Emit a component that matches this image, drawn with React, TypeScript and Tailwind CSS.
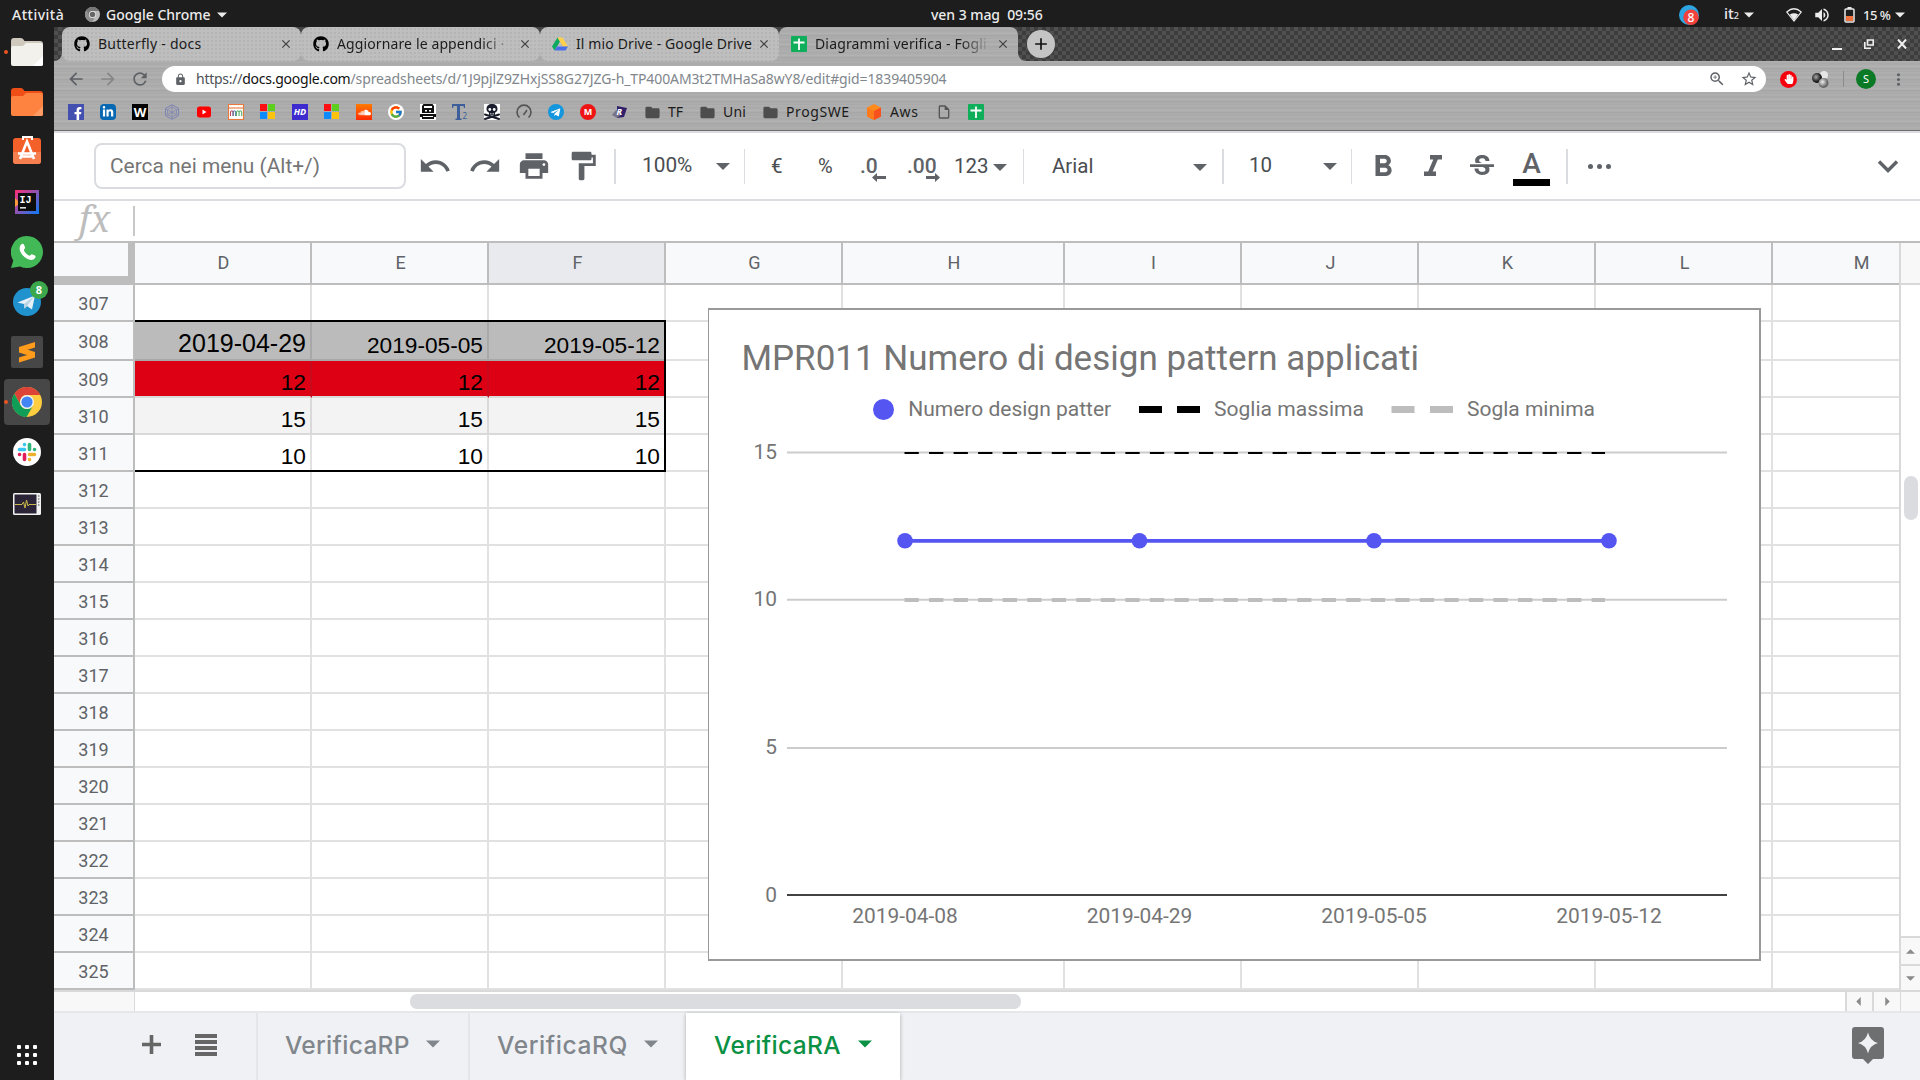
import React from "react";
import {
  MdUndo, MdRedo, MdPrint, MdFormatPaint, MdFormatBold, MdFormatItalic, MdStrikethroughS,
  MdArrowBack, MdArrowForward, MdRefresh, MdLock, MdStarBorder, MdZoomIn, MdMoreVert, MdAdd,
  MdClose, MdFolder, MdVolumeUp, MdOutlineInsertDriveFile,
} from "react-icons/md";
import { FaGithub, FaFacebookF, FaLinkedinIn, FaSoundcloud, FaTelegramPlane, FaHandPaper } from "react-icons/fa";
import { FcGoogle } from "react-icons/fc";

const METAL =
  "bg-[#ababab] bg-[repeating-linear-gradient(180deg,#a6a6a6_0px,#b2b2b2_2px,#a9a9a9_3px,#acacac_5px,#b4b4b4_7px,#a5a5a5_8px,#aeaeae_11px)]";
const CARBON = "bg-[repeating-conic-gradient(#505050_0_25%,#3d3d3d_0_50%)] bg-[length:8px_8px]";

function Caret({ className = "" }: { className?: string }) {
  return (
    <svg viewBox="0 0 14 7" className={"block shrink-0 " + className} fill="currentColor">
      <path d="M0 0h14L7 7z" />
    </svg>
  );
}

function ChromeLogo({ size, gray }: { size: number; gray?: boolean }) {
  const c = gray ? ["#777", "#bbb", "#8e8e8e", "#666"] : ["#db4437", "#ffcd40", "#0f9d58", "#4285f4"];
  return (
    <svg width={size} height={size} viewBox="-15 -15 30 30" className="block shrink-0">
      <circle r="15" fill={c[1]} />
      <path d="M0-7H13.3A15 15 0 0 0-12.6-8.2L-6.1 3.5A7 7 0 0 1 0-7z" fill={c[0]} />
      <path d="M-12.6-8.2A15 15 0 0 0-.4 15L6.1 3.5A7 7 0 0 1-6.1 3.5z" fill={c[2]} />
      <circle r="7" fill="#f1f1f1" />
      <circle r="5.6" fill={c[3]} />
    </svg>
  );
}

function TopBar() {
  return (
    <div className="h-[27px] shrink-0 bg-[#1d1d1d] text-[#ececec] font-['Noto_Sans',sans-serif] text-[14px] leading-[26px] font-medium grid grid-cols-[931px_1fr] whitespace-pre">
      <div className="flex items-center">
        <span className="ml-3 w-[73px] tracking-[0.5px]">Attività</span>
        <ChromeLogo size={15} gray />
        <span className="ml-[6px] w-[111px]">Google Chrome</span>
        <Caret className="w-[10px] h-[6px]" />
      </div>
      <div className="flex items-center">
        <span className="w-[748px] tracking-[-0.05px]">ven 3 mag  09:56</span>
        <svg width="20" height="20" viewBox="0 0 20 20" className="block">
          <circle cx="10" cy="10" r="10" fill="#2ca5e0" />
          <circle cx="12" cy="12.3" r="7.7" fill="#f0413c" />
          <text x="12" y="16.5" textAnchor="middle" fontSize="12" fill="#fff" fontFamily="Noto Sans">8</text>
        </svg>
        <span className="ml-[25px] w-[20px] text-[15px]">it<span className="text-[9px]">2</span></span>
        <Caret className="w-[10px] h-[6px]" />
        <svg width="16" height="14" viewBox="0 0 16 14" className="ml-[32px] block">
          <path d="M.8 4Q8-2.5 15.2 4L8 13z" fill="none" stroke="#ececec" strokeWidth="1.2" />
          <path d="M3.8 6.6Q8 4 12.2 6.6L8 12.5z" fill="#ececec" />
        </svg>
        <MdVolumeUp size={18} className="ml-[11px]" />
        <svg width="11" height="16" viewBox="0 0 11 16" className="ml-[13px] block">
          <path d="M3.5 0h4v2h-4z" fill="#ececec" />
          <rect x="1" y="2" width="9" height="13" rx="1" fill="none" stroke="#ececec" strokeWidth="1.5" />
          <rect x="2" y="9" width="7" height="5" fill="#f0713c" />
        </svg>
        <span className="ml-[8px] w-[32px] text-[13px] tracking-[-0.5px]">15 %</span>
        <Caret className="w-[10px] h-[6px]" />
      </div>
    </div>
  );
}

function DockItem({ h, children, active, dot }: { h: string; children: React.ReactNode; active?: boolean; dot?: boolean }) {
  return (
    <div className={"relative flex items-center justify-center shrink-0 w-[54px] " + h}>
      {dot && <span className="absolute left-1 top-1/2 -mt-0.5 z-10 size-1 rounded-full bg-[#e95420]" />}
      <div className={"size-[46px] rounded flex items-center justify-center " + (active ? "bg-[#474747]" : "")}>{children}</div>
    </div>
  );
}

function DockFolder({ body, tab, hi }: { body: string; tab: string; hi: string }) {
  return (
    <svg width="32" height="29" viewBox="0 0 32 29">
      <path d="M0 3Q0 0 3 0H10Q12 0 13.5 3H29Q32 3 32 6V14H0z" fill={tab} />
      <path d="M0 10Q0 8 2 8H12L15 5H30Q32 5 32 8V26Q32 28 30 28H2Q0 28 0 26z" fill={body} />
      <path d="M32 18V26Q32 28 30 28H22z" fill={hi} />
    </svg>
  );
}

function Dock() {
  return (
    <div className="w-[54px] shrink-0 bg-[#1d1d1d] flex flex-col">
      <DockItem h="h-[50px]" dot><DockFolder body="#f2f1ec" tab="#cfc9bd" hi="#fff" /></DockItem>
      <DockItem h="h-[50px]"><DockFolder body="#ff8340" tab="#f04e17" hi="#ff9c64" /></DockItem>
      <DockItem h="h-[50px]">
        <svg width="30" height="28" viewBox="0 0 30 28" className="mb-[5px]">
          <rect x="1" y="2" width="28" height="26" rx="3" fill="#f4602a" />
          <path d="M1 16h28v9q0 3-3 3H4q-3 0-3-3z" fill="#f67f50" />
          <path d="M11 4V1h9v3" fill="none" stroke="#fff" strokeWidth="2" />
          <path d="M8 23L15 5.500L22 23M6 17.500H24M10 20.500h10" fill="none" stroke="#fff" strokeWidth="2.600" />
        </svg>
      </DockItem>
      <DockItem h="h-[50px]">
        <svg width="24" height="24" viewBox="0 0 24 24">
          <defs>
            <linearGradient id="ij" x1="0" y1="0" x2="1" y2="1">
              <stop offset="0" stopColor="#fe2d75" /><stop offset=".5" stopColor="#8a54b4" /><stop offset="1" stopColor="#087cfa" />
            </linearGradient>
          </defs>
          <rect width="24" height="24" fill="url(#ij)" />
          <path d="M0 8l5 5-5 4z" fill="#fc9a3c" />
          <rect x="3" y="3" width="18" height="18" fill="#0d0d0d" />
          <text x="4.500" y="13" fontSize="10" fontWeight="700" fill="#fff" fontFamily="Liberation Mono">IJ</text>
          <rect x="5" y="17" width="6" height="1.600" fill="#ddd" />
        </svg>
      </DockItem>
      <DockItem h="h-[50px]">
        <svg width="32" height="32" viewBox="0 0 32 32">
          <path d="M16 0a16 16 0 1 1-7 30.400L0 32l2.300-7.600A16 16 0 0 1 16 0z" fill="#42b857" />
          <path d="M10.500 8.200c1-.8 2-.6 2.500.6l1.100 2.800c.2.700-1.400 2-1.200 2.600 1 2.400 3.200 4.500 5.500 5.500.7.200 1.800-1.700 2.500-1.500l3 1.400c.9.500.8 1.500.2 2.500-1.300 2-3.800 2.500-6.300 1.500-4.200-1.700-7.500-5-8.900-9.200-.6-2.400-.2-4.900 1.600-6.200z" fill="#fff" />
        </svg>
      </DockItem>
      <DockItem h="h-[50px]">
        <div className="relative">
          <svg width="28" height="28" viewBox="0 0 28 28">
            <circle cx="14" cy="14" r="14" fill="#2093cf" />
            <path d="M4.500 14.500L22 7.500 19 21.500l-5-3.500-2.500 2.500-.5-4.500z" fill="#e8f1f7" />
            <path d="M11 16L22 7.500 14 18l-2.500 2.500z" fill="#b9d3e4" />
          </svg>
          <span className="absolute -top-[7px] left-[17px] size-[18px] rounded-full bg-[#3aa84b] text-white text-[11px] leading-[18px] text-center font-bold font-['Noto_Sans',sans-serif]">8</span>
        </div>
      </DockItem>
      <DockItem h="h-[50px]">
        <svg width="32" height="32" viewBox="0 0 32 32">
          <rect width="32" height="32" rx="2" fill="#474747" />
          <path d="M8 11L24 6v5.500L8 16.500zM8 11l16 5v5.500L8 16.500zM8 21.500l16-5v5L8 26.500z" fill="#ff9c1c" />
        </svg>
      </DockItem>
      <DockItem h="h-[50px]" dot active><ChromeLogo size={30} /></DockItem>
      <DockItem h="h-[50px]">
        <svg width="28" height="28" viewBox="0 0 28 28" strokeWidth="3.600" strokeLinecap="round">
          <circle cx="14" cy="14" r="14" fill="#fff" />
          <path d="M6.500 11.500H11.500M11.500 6.500v.1" stroke="#36c5f0" />
          <path d="M16.500 6.500V11.500M21.500 11.500h.1" stroke="#2eb67d" />
          <path d="M16.500 16.500H21.500M16.500 21.500v.1" stroke="#ecb22e" />
          <path d="M11.500 16.500V21.500M6.500 16.500h.1" stroke="#e01e5a" />
        </svg>
      </DockItem>
      <DockItem h="h-[54px]">
        <svg width="28" height="22" viewBox="0 0 28 22">
          <rect width="28" height="22" rx="1.500" fill="#f2f2f2" />
          <rect x="1.500" y="1.500" width="22" height="19" fill="#2b2336" />
          <path d="M2 11.500h7l1.500-2.500 1.500 6L13.500 7l1.500 6 1-1.500H23" fill="none" stroke="#c9b94a" strokeWidth="1" />
          <path d="M25.700 2v12" stroke="#999" strokeWidth="1.500" strokeDasharray="2 1" />
        </svg>
      </DockItem>
      <div className="mt-auto mb-[15px] ml-[17px] grid grid-cols-3 gap-1 w-5">
        {Array.from({ length: 9 }, (_, i) => <span key={i} className="size-1 rounded-[1px] bg-white" />)}
      </div>
    </div>
  );
}

function DriveIcon() {
  return (
    <svg width="16" height="16" viewBox="0 0 16 16" className="block shrink-0">
      <path d="M5.500 1.500L0 10.500l2.500 4L8 5.500z" fill="#0da960" />
      <path d="M5.500 1.500h5l5.500 9h-5z" fill="#ffd04b" />
      <path d="M5 10.500h11l-2.500 4h-11z" fill="#4b6ee8" />
    </svg>
  );
}

function SheetsIcon() {
  return (
    <svg width="16" height="16" viewBox="0 0 16 16" className="block shrink-0">
      <rect width="16" height="16" rx="1" fill="#0fae5b" />
      <path d="M8 2.500V14M2.500 6.500h11" stroke="#fff" strokeWidth="1.800" />
    </svg>
  );
}

function Tab({ icon, title, active, fade, sep, tw }: { icon: React.ReactNode; title: string; active?: boolean; fade?: boolean; sep?: boolean; tw?: string }) {
  return (
    <div className="w-[239px] shrink-0 bg-[linear-gradient(#444_8px,transparent_8px)]">
      <div
        className={
          "relative h-[34px] flex items-center pl-3 pr-[11px] rounded-t-lg " +
          (active ? METAL : "bg-[#bebebe] bg-[radial-gradient(#b4b4b4_0.8px,transparent_1px)] bg-[length:4px_4px] rounded-b-lg")
        }
      >
        {icon}
        <span
          className={
            "ml-2 w-[178px] whitespace-nowrap text-[14px] leading-5 text-[#1b1b1b] " + (tw ?? "") +
            (fade ? " [mask-image:linear-gradient(90deg,#000_145px,transparent_176px)]" : "")
          }
        >
          {title}
        </span>
        <MdClose size={14} className="ml-auto -mr-[3px] shrink-0 text-[#3f3f3f]" />
        {sep && <span className="absolute -right-px top-2 h-[19px] w-px bg-[#7b7b7b]" />}
      </div>
    </div>
  );
}

function Sq({ bg, children, round }: { bg: string; children?: React.ReactNode; round?: boolean }) {
  return (
    <span className={"size-4 shrink-0 flex items-center justify-center text-white font-bold leading-4 font-['Noto_Sans',sans-serif] " + bg + (round ? " rounded-full" : "")}>
      {children}
    </span>
  );
}

function MsIcon() {
  return (
    <span className="size-4 shrink-0 grid grid-cols-[7px_7px] grid-rows-[7px_7px] gap-px">
      <i className="bg-[#ff0f12]" /><i className="bg-[#5cd01c]" /><i className="bg-[#0f8bfb]" /><i className="bg-[#ffc20e]" />
    </span>
  );
}

function Bookmarks() {
  return (
    <div className="h-[30px] flex items-center pl-[14px] text-[14px] leading-5 text-[#1b1b1b] whitespace-nowrap">
      <div className="flex gap-4 w-[577px]">
        <Sq bg="bg-[#4350af]"><FaFacebookF size={13} className="mt-[3px] ml-1" /></Sq>
        <Sq bg="bg-[#0667b2] rounded-sm"><FaLinkedinIn size={12} /></Sq>
        <Sq bg="bg-black text-[13px]">W</Sq>
        <svg width="16" height="16" viewBox="0 0 16 16" fill="none" stroke="#7d83b3" className="shrink-0">
          <path d="M8 .7l6.500 3.700v7.200L8 15.300 1.500 11.600V4.400z" /><path d="M8 3l4.500 2.500v5L8 13l-4.500-2.500v-5zM8 1v14M2 5l12 6.500M14 5L2 11.500" strokeWidth=".7" />
        </svg>
        <svg width="16" height="16" viewBox="0 0 16 16" className="shrink-0">
          <rect x="1" y="2.500" width="14" height="11" rx="2.500" fill="#f00" /><path d="M6.500 5.500v5l4-2.500z" fill="#fff" />
        </svg>
        <svg width="16" height="16" viewBox="0 0 16 16" fill="none" strokeWidth="1.100" className="shrink-0">
          <rect x=".5" y=".5" width="15" height="15" fill="#fff" stroke="#e8793a" />
          <path d="M1 4h14" stroke="#e8793a" /><path d="M2.500 12V8q1.300-2.500 2.600 0v4" stroke="#b45" /><path d="M5.100 12V8q1.300-2.500 2.600 0v4" stroke="#57a" /><path d="M8.500 12V8q1.300-2.500 2.600 0v4M11.100 8q1.300-2.500 2.600 0v4" stroke="#5a6" />
        </svg>
        <MsIcon />
        <Sq bg="bg-[#3d2bd0] text-[9px] italic">HD</Sq>
        <MsIcon />
        <Sq bg="bg-[linear-gradient(#ff7a00,#ff2a00)]"><FaSoundcloud size={13} /></Sq>
        <Sq bg="bg-white" round><FcGoogle size={14} /></Sq>
        <svg width="16" height="16" viewBox="0 0 16 16" className="shrink-0">
          <rect width="16" height="16" fill="#fff" />
          <path d="M3.500 0h9l1.500 2v7H2V2z" fill="#111" /><path d="M4 2h8v2H4zM5 6h2v1.500H5zM9 6h2v1.500H9z" fill="#fff" />
          <path d="M0 10h16v3h-2v2H2v-2H0z" fill="#111" /><path d="M3 12h10v1H3z" fill="#fff" />
        </svg>
        <svg width="16" height="16" viewBox="0 0 16 16" className="shrink-0" fill="#3c5f9c">
          <path d="M0 0h13v4h-1L11.500 2H8v12.500h1.500V16h-6v-1.500H5V2H1.500L1 4H0z" /><text x="10.500" y="15" fontSize="8" fontFamily="Noto Sans">2</text>
        </svg>
        <svg width="16" height="16" viewBox="0 0 16 16" className="shrink-0">
          <rect width="16" height="16" fill="#fff" />
          <path d="M1 10.500l14 4.500M15 10.500L1 15" stroke="#1a1d2b" strokeWidth="2" strokeLinecap="round" />
          <path d="M8 0C4.500 0 2.500 2 2.500 5c0 2 1 3 2.500 3.700V11h6V8.700C12.500 8 13.500 7 13.500 5c0-3-2-5-5.500-5z" fill="#1a1d2b" />
          <circle cx="5.800" cy="5.500" r="1.400" fill="#fff" /><circle cx="10.200" cy="5.500" r="1.400" fill="#fff" /><path d="M6.500 9v1.500M8 9v1.500M9.500 9v1.500" stroke="#fff" strokeWidth=".6" />
        </svg>
        <svg width="16" height="16" viewBox="0 0 16 16" fill="none" stroke="#555" strokeWidth="1.600" className="shrink-0">
          <path d="M3.500 13.500A7 7 0 1 1 12.500 13.500M7.500 11L11 6" />
        </svg>
        <Sq bg="bg-[#1296dd]" round><FaTelegramPlane size={11} className="-ml-0.5" /></Sq>
        <Sq bg="bg-[#ee1414] text-[9px]" round>M</Sq>
        <svg width="16" height="16" viewBox="0 0 16 16" className="shrink-0">
          <path d="M5 2l10 2-3 9-7 1z" fill="#33206b" /><path d="M0 11l4-5 6 4-5 4z" fill="#77738a" /><text x="4.500" y="11" fontSize="9" fontWeight="700" fontStyle="italic" fill="#fff" fontFamily="Noto Sans">R</text>
        </svg>
      </div>
      <MdFolder size={17} className="text-[#4d4d4d] mr-[7px] -ml-px" /><span className="w-[32px]">TF</span>
      <MdFolder size={17} className="text-[#4d4d4d] mr-[7px] -ml-px" /><span className="w-[40px] tracking-[0.2px]">Uni</span>
      <MdFolder size={17} className="text-[#4d4d4d] mr-[7px] -ml-px" /><span className="w-[80px] tracking-[0.6px]">ProgSWE</span>
      <svg width="16" height="16" viewBox="0 0 16 16" className="mr-2 shrink-0">
        <path d="M8 0l7 3.500v9L8 16 1 12.500v-9z" fill="#ff8a1e" /><path d="M8 7l7-3.500v9L8 16z" fill="#f9511d" /><path d="M1 3.500L8 7v9l-7-3.500z" fill="#ff7a1a" />
      </svg>
      <span className="w-[46px] tracking-[0.6px]">Aws</span>
      <MdOutlineInsertDriveFile size={16} className="text-[#555] mr-4" />
      <SheetsIcon />
    </div>
  );
}

function ChromeFrame() {
  return (
    <div className={"h-[104px] shrink-0 font-['Noto_Sans',sans-serif] border-b border-[#6f6f6f] " + METAL}>
      <div className="flex h-[34px]">
        <div className={"w-2 rounded-br-lg " + CARBON} />
        <Tab icon={<FaGithub size={16} className="shrink-0" />} title="Butterfly - docs" sep tw="tracking-[0.25px]" />
        <Tab icon={<FaGithub size={16} className="shrink-0" />} title="Aggiornare le appendici ·" tw="tracking-[0.12px]" fade sep />
        <Tab icon={<DriveIcon />} title="Il mio Drive - Google Drive" tw="tracking-[0.12px]" />
        <Tab icon={<SheetsIcon />} title="Diagrammi verifica - Fogli" active fade tw="tracking-[0.15px]" />
        <div className={"flex-1 rounded-bl-lg flex items-center text-[#f0f0f0] " + CARBON}>
          <span className="ml-[9px] size-7 rounded-full bg-[#c4c4c4] text-[#111] flex items-center justify-center"><MdAdd size={20} /></span>
          <span className="ml-auto mt-[9px] h-0.5 w-[10px] bg-current" />
          <svg width="10" height="10" viewBox="0 0 10 10" className="ml-[22px]" fill="none" stroke="currentColor" strokeWidth="1.600">
            <path d="M3.500 1h5.700v5H3.500zM.8 3v6.200H7" />
          </svg>
          <svg width="10" height="10" viewBox="0 0 10 10" className="ml-[23px] mr-[13px]" stroke="currentColor" strokeWidth="2"><path d="M1 .5l8 9M9 .5l-8 9" /></svg>
        </div>
      </div>
      <div className="h-9 flex items-center">
        <MdArrowBack size={20} className="ml-3 text-[#5d6065]" />
        <MdArrowForward size={20} className="ml-3 text-[#868686]" />
        <MdRefresh size={20} className="ml-3 text-[#5d6065]" />
        <div className="ml-[12px] w-[1604px] h-[26px] rounded-full bg-white flex items-center pl-[12px] text-[#5f6368]">
          <MdLock size={13} />
          <span className="ml-[9px] flex-1 text-[14px] leading-5 text-[#80868b] tracking-[-0.11px]">
            <span className="text-[#4d5156] tracking-[-0.25px]">https://</span><span className="text-[#111] tracking-[-0.25px]">docs.google.com</span>/spreadsheets/d/1J9pjlZ9ZHxjSS8G27JZG-h_TP400AM3t2TMHaSa8wY8/edit#gid=1839405904
          </span>
          <MdZoomIn size={18} />
          <MdStarBorder size={18} className="ml-[14px] mr-2" />
        </div>
        <span className="ml-[14px] size-[17px] rounded-full bg-[#f5000c] text-white flex items-center justify-center"><FaHandPaper size={10} /></span>
        <svg width="17" height="17" viewBox="0 0 17 17" className="ml-[15px]">
          <defs>
            <radialGradient id="ba" cx=".4" cy=".4"><stop offset="0" stopColor="#aaa" /><stop offset="1" stopColor="#111" /></radialGradient>
            <radialGradient id="bb" cx=".4" cy=".4"><stop offset="0" stopColor="#eee" /><stop offset="1" stopColor="#666" /></radialGradient>
          </defs>
          <circle cx="12" cy="4" r="4" fill="#e6e6e6" /><circle cx="5" cy="7" r="5" fill="url(#ba)" /><circle cx="11.500" cy="12" r="5" fill="url(#bb)" />
        </svg>
        <span className="ml-[14px] h-4 w-px bg-[#8b8b8b]" />
        <span className="ml-[12px] size-5 rounded-full bg-[#0b7a26] text-white text-[11px] leading-5 text-center">S</span>
        <MdMoreVert size={19} className="ml-[13px] text-[#5d6065]" />
      </div>
      <Bookmarks />
    </div>
  );
}

const Sep = ({ className = "" }: { className?: string }) => <span className={"h-[35px] w-0.5 shrink-0 bg-[#dadce0] " + className} />;

function DecimalArrow({ right, className }: { right?: boolean; className: string }) {
  return (
    <svg width="14" height="9" viewBox="0 0 14 9" className={"absolute " + className} fill="currentColor">
      {right ? <path d="M14 4.500L9 0v3H0v3h9v3z" /> : <path d="M0 4.500L5 0v3h9v3H5v3z" />}
    </svg>
  );
}

function SheetToolbar() {
  return (
    <div className="h-[70px] shrink-0 border-t-2 border-b-2 border-[#dadce0] bg-white flex items-center font-['Roboto',sans-serif] text-[20.500px] leading-6 text-[#4a4d51] [&_svg]:text-[#5f6368]">
      <div className="ml-10 w-[312px] h-[46px] rounded-lg border-2 border-[#dadce0] pl-[14px] leading-[42px] text-[#757575] text-[20.900px]">Cerca nei menu (Alt+/)</div>
      <MdUndo size={34} className="ml-3 shrink-0" />
      <MdRedo size={34} className="ml-[16px] shrink-0" />
      <MdPrint size={34} className="ml-[15px] shrink-0" />
      <MdFormatPaint size={34} className="ml-[15px] shrink-0" />
      <Sep className="ml-[14px]" />
      <span className="ml-[26px] w-[74px] text-[20.800px] -mt-0.5">100%</span>
      <Caret className="w-[14px] h-[7px]" />
      <Sep className="ml-[14px] w-px" />
      <span className="ml-[26px] w-[47px]">€</span>
      <span className="w-[42px] text-[20px]">%</span>
      <span className="relative w-[47px] text-[21px] font-medium text-[#5f6368]">.0<DecimalArrow className="left-[12px] top-[19px]" /></span>
      <span className="relative w-[47px] text-[21px] font-medium text-[#5f6368]">.00<DecimalArrow right className="left-[19px] top-[19px]" /></span>
      <span className="w-[39px]">123</span>
      <Caret className="w-[14px] h-[7px] mt-0.5" />
      <Sep className="ml-[16px] w-px" />
      <span className="ml-[28px] w-[141px]">Arial</span>
      <Caret className="w-[14px] h-[7px] mt-0.5" />
      <Sep className="ml-[15px] w-0.5" />
      <span className="ml-[25px] w-[74px] -mt-0.5">10</span>
      <Caret className="w-[14px] h-[7px]" />
      <Sep className="ml-[14px] w-px" />
      <MdFormatBold size={36} className="ml-[13px] mt-0.5 shrink-0" />
      <MdFormatItalic size={36} className="ml-[14px] mt-0.5 shrink-0" />
      <MdStrikethroughS size={32} className="ml-[15px] mt-0.5 shrink-0" />
      <div className="ml-[15px] w-[37px] h-[38px] mt-0.5 flex flex-col items-center shrink-0">
        <span className="text-[28px] leading-[31px] font-medium text-[#5f6368]">A</span>
        <span className="h-[7px] w-full bg-black" />
      </div>
      <Sep className="ml-[16px]" />
      <div className="ml-[20px] flex gap-[4px]">
        {[0, 1, 2].map((i) => <span key={i} className="size-[5px] rounded-full bg-[#5f6368]" />)}
      </div>
      <svg width="22" height="14" viewBox="0 0 22 14" className="ml-auto mr-[21px] mt-0.5" fill="none" stroke="currentColor" strokeWidth="3.400"><path d="M2 1.500l9 9 9-9" /></svg>
    </div>
  );
}

type Cell = { v: string; big?: boolean };
const HEADERS = ["D", "E", "F", "G", "H", "I", "J", "K", "L", "M"];
const COLS = "grid-cols-[177px_177px_177px_177px_222px_177px_177px_177px_177px_minmax(0,1fr)]";

const DATA: Record<number, { cells: Cell[]; bg: string; line: string }> = {
  308: { cells: [{ v: "2019-04-29", big: true }, { v: "2019-05-05" }, { v: "2019-05-12" }], bg: "bg-[#bbbbbb]", line: "border-[#a8a8a8]" },
  309: { cells: [{ v: "12" }, { v: "12" }, { v: "12" }], bg: "bg-[#dd0014]", line: "border-r-[#c70a1c] border-b-[#dbdbdb]" },
  310: { cells: [{ v: "15" }, { v: "15" }, { v: "15" }], bg: "bg-[#f3f3f3]", line: "border-[#d9d9d9]" },
  311: { cells: [{ v: "10" }, { v: "10" }, { v: "10" }], bg: "bg-white", line: "border-[#e1e1e1]" },
};

function Row({ n }: { n: number }) {
  const h = n === 308 ? "h-[39px]" : "h-[37px]";
  const data = DATA[n];
  return (
    <div className={"flex shrink-0 " + h}>
      <div className="w-[81px] shrink-0 border-r-2 border-b-2 border-[#bdbdbd] bg-[#f8f9fa] flex items-center justify-center pt-0.5 text-[18px] leading-5 text-[#5f6368]">{n}</div>
      <div className={"flex-1 grid " + COLS}>
        {HEADERS.map((c, i) => {
          const cell = data?.cells[i];
          return (
            <div key={c} className={"border-b-2 flex items-end justify-end pr-1 font-['Liberation_Sans',Arial,sans-serif] text-black " + (i < 9 ? "border-r-2 " : "") + (cell ? data.line + " " + data.bg : "border-[#e1e1e1] bg-white")}>
              {cell && <span className={cell.big ? "text-[25px] leading-[25px] pb-[3px]" : "text-[22.700px] leading-[24px] pb-0.5"}>{cell.v}</span>}
            </div>
          );
        })}
      </div>
    </div>
  );
}

function Chart() {
  const xs = [905, 1139.5, 1374, 1609];
  const dates = ["2019-04-08", "2019-04-29", "2019-05-05", "2019-05-12"];
  const ticks: [string, number][] = [["15", 452.5], ["10", 599.7], ["5", 747.9]];
  return (
    <div className="absolute left-[654px] top-[23px] w-[1053px] h-[653px] bg-white border-2 border-l border-[#999]">
      <svg width="1050" height="649" viewBox="709 310 1050 649" fontFamily="Roboto, sans-serif" fontSize="20.900" fill="#757575" className="block">
        <text x="741.500" y="369.500" fontSize="35.500" textLength="677.500" lengthAdjust="spacingAndGlyphs">MPR011 Numero di design pattern applicati</text>
        <circle cx="883.500" cy="409.500" r="10.500" fill="#5555f2" />
        <text x="908.200" y="415.700" textLength="203" lengthAdjust="spacingAndGlyphs">Numero design patter</text>
        <path d="M1139 409.500h23M1177 409.500h23" stroke="#000" strokeWidth="7" />
        <text x="1214" y="415.700" textLength="150" lengthAdjust="spacingAndGlyphs">Soglia massima</text>
        <path d="M1391.500 409.500h23M1430 409.500h23" stroke="#bdbdbd" strokeWidth="7" />
        <text x="1467" y="415.700" textLength="128" lengthAdjust="spacingAndGlyphs">Sogla minima</text>
        {ticks.map(([t, y]) => (
          <g key={t}>
            <path d={`M787 ${y}H1727`} stroke="#ccc" strokeWidth="2" />
            <text x="777" y={y + 6.1} textAnchor="end">{t}</text>
          </g>
        ))}
        <path d="M787 895H1727" stroke="#424242" strokeWidth="2" />
        <text x="777" y="901.500" textAnchor="end">0</text>
        <path d="M904.500 453H1605" stroke="#000" strokeWidth="2" strokeDasharray="14.300 10.240" />
        <path d="M904.500 600H1605" stroke="#bdbdbd" strokeWidth="4" strokeDasharray="14.300 10.240" />
        <path d="M905 540.800H1609" stroke="#5555f2" strokeWidth="3.800" />
        {xs.map((x, i) => (
          <g key={x}>
            <circle cx={x} cy="540.700" r="7.800" fill="#5555f2" />
            <text x={x} y="923" textAnchor="middle">{dates[i]}</text>
          </g>
        ))}
      </svg>
    </div>
  );
}

function Grid() {
  const rows = Array.from({ length: 19 }, (_, i) => 307 + i);
  return (
    <div className="h-[747px] shrink-0 flex font-['Roboto',sans-serif]">
      <div className="w-[1845px] shrink-0 flex flex-col">
        <div className="flex h-[42px] shrink-0 border-b-2 border-[#bdbdbd]">
          <div className="w-[81px] shrink-0 border-r-[7px] border-b-[7px] border-[#bdbdbd] bg-[#f8f9fa]" />
          <div className={"flex-1 grid overflow-hidden " + COLS}>
            {HEADERS.map((c, i) => (
              <div key={c} className={"flex items-center justify-center pb-0.5 text-[18px] text-[#5f6368] border-[#bdbdbd] " + (i < 9 ? "pl-0.5 border-r-2 " : "pl-[51px] ") + (c === "F" ? "bg-[#e8eaed]" : "bg-[#f8f9fa]")}>{c}</div>
            ))}
          </div>
        </div>
        <div className="relative">
          {rows.map((n) => <Row key={n} n={n} />)}
          <div className="absolute left-[81px] top-[35px] w-[531px] h-[152px] border-2 border-l-0 border-black" />
          <Chart />
        </div>
      </div>
      <div className="flex-1 border-l-2 border-[#d9d9d9] flex flex-col items-stretch text-[#8a8a8a]">
        <div className="h-[42px] bg-[#f8f8f8] border-b-2 border-[#d9d9d9]" />
        <div className="mt-[191px] ml-[3px] w-[14px] h-[44px] rounded-[7px] bg-[#dadce0]" />
        <div className="mt-auto h-[28px] border-t-2 border-[#d9d9d9] bg-[#f8f8f8] flex items-center justify-center"><Caret className="w-[9px] h-[5px] rotate-180" /></div>
        <div className="h-[26px] border-t-2 border-[#d9d9d9] bg-[#f8f8f8] flex items-center justify-center"><Caret className="w-[9px] h-[5px]" /></div>
      </div>
    </div>
  );
}

function HScroll() {
  return (
    <div className="h-[21px] shrink-0 border-t-2 border-[#d9d9d9] bg-white flex items-center text-[#8a8a8a]">
      <div className="w-[81px] h-full bg-[#f8f8f8] border-r border-[#d9d9d9]" />
      <div className="ml-[275px] w-[611px] h-[15px] rounded-[7px] bg-[#dadce0]" />
      <div className="ml-auto h-full w-[27px] border-l-2 border-[#d9d9d9] bg-[#f8f8f8] flex items-center justify-center"><Caret className="w-[9px] h-[5px] mr-0.5 rotate-90" /></div>
      <div className="h-full w-[28px] border-l-2 border-[#d9d9d9] bg-[#f8f8f8] flex items-center justify-center"><Caret className="w-[9px] h-[5px] -rotate-90" /></div>
      <div className="h-full w-[20px] border-l border-[#d9d9d9] bg-[#f8f8f8]" />
    </div>
  );
}

function SheetTab({ name, w, active, text }: { name: string; w: string; active?: boolean; text: string }) {
  return (
    <div className={"h-full flex items-center pl-[27px] pb-[5px] " + w + (active ? " bg-white text-[#0b9144] shadow-[0_1px_4px_rgba(0,0,0,0.3)]" : " text-[#80868b] border-l-2 border-[#e4e6e9]")}>
      <span className={"flex-1 pt-0.5 " + text}>{name}</span>
      <Caret className="w-[14px] h-[8px] mr-[28px]" />
    </div>
  );
}

function BottomBar() {
  return (
    <div className="flex-1 bg-[#f0f1f4] border-t-2 border-[#e6e7ea] flex items-center font-['Inter',sans-serif] font-medium">
      <svg width="19" height="19" viewBox="0 0 19 19" className="ml-[88px] mb-[5px]" stroke="#666" strokeWidth="3.600"><path d="M9.500 0v19M0 9.500h19" /></svg>
      <svg width="22" height="22" viewBox="0 0 22 22" className="ml-[34px] mb-[4px]" stroke="#666" strokeWidth="4"><path d="M0 2h22M0 8h22M0 14h22M0 20h22" /></svg>
      <div className="ml-[39px] flex h-full">
        <SheetTab name="VerificaRP" w="w-[212px]" text="text-[24.500px] tracking-[0.3px]" />
        <SheetTab name="VerificaRQ" w="w-[218px]" text="text-[24.500px] tracking-[0.6px]" />
        <SheetTab name="VerificaRA" w="w-[214px]" text="text-[24.500px] tracking-[0.35px] pl-px" active />
      </div>
      <svg width="32" height="37" viewBox="0 0 32 37" className="ml-auto mr-[36px] mb-[3px]">
        <path d="M3 0h26q3 0 3 3v26q0 3-3 3h-8l-5 5-5-5H3q-3 0-3-3V3q0-3 3-3z" fill="#6e6f71" />
        <path d="M16 5.500Q18 14 26 16 18 18 16 26.500 14 18 6 16 14 14 16 5.500z" fill="#f0f1f4" />
      </svg>
    </div>
  );
}

export default function App() {
  return (
    <div className="w-[1920px] h-[1080px] overflow-hidden flex flex-col bg-white">
      <TopBar />
      <div className="flex-1 min-h-0 flex">
        <Dock />
        <div className="flex-1 min-w-0 flex flex-col">
          <ChromeFrame />
          <SheetToolbar />
          <div className="h-[42px] shrink-0 border-b-2 border-[#bdbdbd] flex items-center">
            <span className="w-[79px] pl-[25px] pb-1 font-['Noto_Serif','Liberation_Serif',serif] italic text-[36px] leading-[34px] text-[#bdbdbd]">fx</span>
            <span className="h-[30px] w-0.5 bg-[#c8c8c8]" />
          </div>
          <Grid />
          <HScroll />
          <BottomBar />
        </div>
      </div>
    </div>
  );
}
